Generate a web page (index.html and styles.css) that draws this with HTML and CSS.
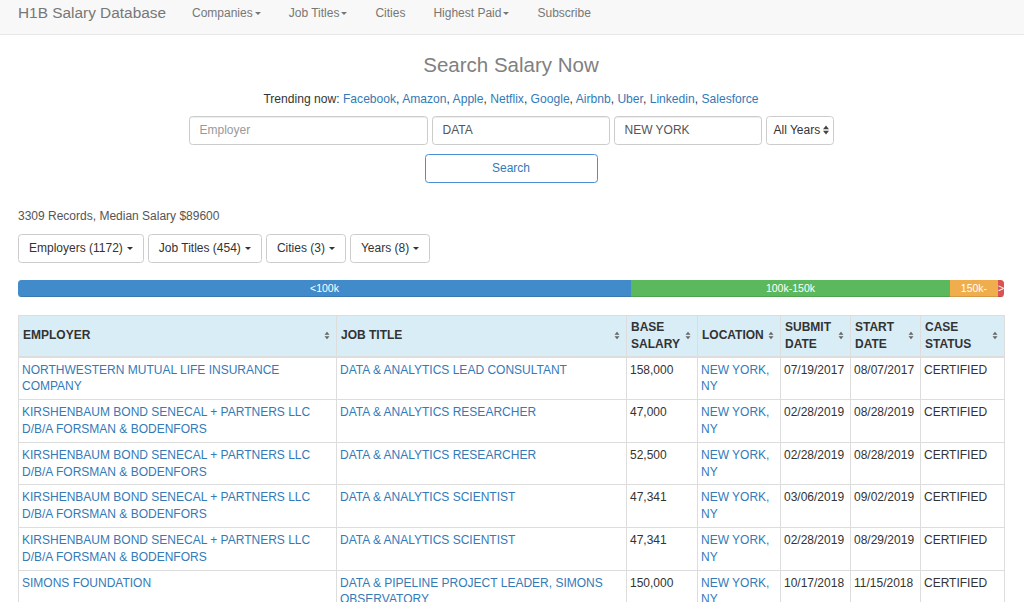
FILE: index.html
```html
<!DOCTYPE html>
<html lang="en">
<head>
<meta charset="utf-8">
<title>H1B Salary Database</title>
<link rel="stylesheet" href="styles.css">
</head>
<body>
<nav class="navbar">
  <a class="brand" href="#">H1B Salary Database</a>
  <ul class="nav">
    <li><a href="#">Companies<span class="caret"></span></a></li>
    <li><a href="#">Job Titles<span class="caret"></span></a></li>
    <li><a href="#">Cities</a></li>
    <li><a href="#">Highest Paid<span class="caret"></span></a></li>
    <li><a href="#">Subscribe</a></li>
  </ul>
</nav>
<main class="page">
  <h1 class="title">Search Salary Now</h1>
  <p class="trending">Trending now: <a href="#">Facebook</a>, <a href="#">Amazon</a>, <a href="#">Apple</a>, <a href="#">Netflix</a>, <a href="#">Google</a>, <a href="#">Airbnb</a>, <a href="#">Uber</a>, <a href="#">Linkedin</a>, <a href="#">Salesforce</a></p>
  <form class="search">
    <div class="fields">
      <input class="field f-employer" type="text" placeholder="Employer">
      <input class="field f-title" type="text" value="DATA">
      <input class="field f-city" type="text" value="NEW YORK">
      <div class="field f-year"><span>All Years</span><svg class="updown" width="6" height="10" viewBox="0 0 6 10"><path d="M0 4.2 L3 0.5 L6 4.2Z M0 5.8 L3 9.5 L6 5.8Z"/></svg></div>
    </div>
    <button class="search-btn" type="button">Search</button>
  </form>
  <p class="summary">3309 Records, Median Salary $89600</p>
  <div class="filters">
    <button class="filter" type="button">Employers (1172)<span class="caret"></span></button>
    <button class="filter" type="button">Job Titles (454)<span class="caret"></span></button>
    <button class="filter" type="button">Cities (3)<span class="caret"></span></button>
    <button class="filter" type="button">Years (8)<span class="caret"></span></button>
  </div>
  <div class="progress">
    <div class="bar bar-blue" style="width:62.17%">&lt;100k</div>
    <div class="bar bar-green" style="width:32.35%">100k-150k</div>
    <div class="bar bar-orange" style="width:4.87%">150k-</div>
    <div class="bar bar-red" style="width:0.61%">&gt;</div>
  </div>
  <table class="data">
    <colgroup>
      <col class="c-emp"><col class="c-job"><col class="c-sal"><col class="c-loc"><col class="c-sub"><col class="c-start"><col class="c-status">
    </colgroup>
    <thead>
      <tr>
        <th><div class="th-inner"><span class="th-label">EMPLOYER</span><svg class="sort" width="6" height="9" viewBox="0 0 6 9"><path d="M0.5 3.8 L3 0.8 L5.5 3.8Z M0.5 5.2 L3 8.2 L5.5 5.2Z"/></svg></div></th>
        <th><div class="th-inner"><span class="th-label">JOB TITLE</span><svg class="sort" width="6" height="9" viewBox="0 0 6 9"><path d="M0.5 3.8 L3 0.8 L5.5 3.8Z M0.5 5.2 L3 8.2 L5.5 5.2Z"/></svg></div></th>
        <th><div class="th-inner"><span class="th-label">BASE SALARY</span><svg class="sort" width="6" height="9" viewBox="0 0 6 9"><path d="M0.5 3.8 L3 0.8 L5.5 3.8Z M0.5 5.2 L3 8.2 L5.5 5.2Z"/></svg></div></th>
        <th><div class="th-inner"><span class="th-label">LOCATION</span><svg class="sort" width="6" height="9" viewBox="0 0 6 9"><path d="M0.5 3.8 L3 0.8 L5.5 3.8Z M0.5 5.2 L3 8.2 L5.5 5.2Z"/></svg></div></th>
        <th><div class="th-inner"><span class="th-label">SUBMIT DATE</span><svg class="sort" width="6" height="9" viewBox="0 0 6 9"><path d="M0.5 3.8 L3 0.8 L5.5 3.8Z M0.5 5.2 L3 8.2 L5.5 5.2Z"/></svg></div></th>
        <th><div class="th-inner"><span class="th-label">START DATE</span><svg class="sort" width="6" height="9" viewBox="0 0 6 9"><path d="M0.5 3.8 L3 0.8 L5.5 3.8Z M0.5 5.2 L3 8.2 L5.5 5.2Z"/></svg></div></th>
        <th><div class="th-inner"><span class="th-label">CASE STATUS</span><svg class="sort" width="6" height="9" viewBox="0 0 6 9"><path d="M0.5 3.8 L3 0.8 L5.5 3.8Z M0.5 5.2 L3 8.2 L5.5 5.2Z"/></svg></div></th>
      </tr>
    </thead>
    <tbody>
      <tr>
        <td><a href="#">NORTHWESTERN MUTUAL LIFE INSURANCE COMPANY</a></td>
        <td><a href="#">DATA &amp; ANALYTICS LEAD CONSULTANT</a></td>
        <td>158,000</td>
        <td><a href="#">NEW YORK, NY</a></td>
        <td class="nw">07/19/2017</td>
        <td class="nw">08/07/2017</td>
        <td>CERTIFIED</td>
      </tr>
      <tr>
        <td><a href="#">KIRSHENBAUM BOND SENECAL + PARTNERS LLC D/B/A FORSMAN &amp; BODENFORS</a></td>
        <td><a href="#">DATA &amp; ANALYTICS RESEARCHER</a></td>
        <td>47,000</td>
        <td><a href="#">NEW YORK, NY</a></td>
        <td class="nw">02/28/2019</td>
        <td class="nw">08/28/2019</td>
        <td>CERTIFIED</td>
      </tr>
      <tr>
        <td><a href="#">KIRSHENBAUM BOND SENECAL + PARTNERS LLC D/B/A FORSMAN &amp; BODENFORS</a></td>
        <td><a href="#">DATA &amp; ANALYTICS RESEARCHER</a></td>
        <td>52,500</td>
        <td><a href="#">NEW YORK, NY</a></td>
        <td class="nw">02/28/2019</td>
        <td class="nw">08/28/2019</td>
        <td>CERTIFIED</td>
      </tr>
      <tr>
        <td><a href="#">KIRSHENBAUM BOND SENECAL + PARTNERS LLC D/B/A FORSMAN &amp; BODENFORS</a></td>
        <td><a href="#">DATA &amp; ANALYTICS SCIENTIST</a></td>
        <td>47,341</td>
        <td><a href="#">NEW YORK, NY</a></td>
        <td class="nw">03/06/2019</td>
        <td class="nw">09/02/2019</td>
        <td>CERTIFIED</td>
      </tr>
      <tr>
        <td><a href="#">KIRSHENBAUM BOND SENECAL + PARTNERS LLC D/B/A FORSMAN &amp; BODENFORS</a></td>
        <td><a href="#">DATA &amp; ANALYTICS SCIENTIST</a></td>
        <td>47,341</td>
        <td><a href="#">NEW YORK, NY</a></td>
        <td class="nw">02/28/2019</td>
        <td class="nw">08/29/2019</td>
        <td>CERTIFIED</td>
      </tr>
      <tr>
        <td><a href="#">SIMONS FOUNDATION</a></td>
        <td><a href="#">DATA &amp; PIPELINE PROJECT LEADER, SIMONS OBSERVATORY</a></td>
        <td>150,000</td>
        <td><a href="#">NEW YORK, NY</a></td>
        <td class="nw">10/17/2018</td>
        <td class="nw">11/15/2018</td>
        <td>CERTIFIED</td>
      </tr>
    </tbody>
  </table>
</main>
</body>
</html>
```

FILE: styles.css
```css
html {
  overflow: hidden;
}

body {
  margin: 0;
  font-family: "Liberation Sans", Arial, sans-serif;
  font-size: 12px;
  line-height: 1.4;
  color: #333;
  background: #fff;
}

a {
  color: #337ab7;
  text-decoration: none;
}

.navbar {
  height: 34px;
  border-bottom: 1px solid #e7e7e7;
  background: #f8f8f8;
  display: flex;
  align-items: flex-start;
  padding-left: 18px;
}

.brand {
  font-size: 15.4px;
  line-height: 20px;
  padding-top: 3px;
  margin-right: 12px;
  color: #777;
}

.nav {
  display: flex;
  list-style: none;
  margin: 0;
  padding: 0;
}

.nav a {
  display: block;
  padding: 4.5px 14px 0;
  line-height: 17px;
  color: #777;
}

.caret {
  display: inline-block;
  width: 0;
  height: 0;
  margin-left: 2px;
  vertical-align: middle;
  border-top: 3.5px solid;
  border-left: 3.5px solid transparent;
  border-right: 3.5px solid transparent;
}

.page {
  padding: 0 20px 0 18px;
}

.title {
  margin: 18px 0 0;
  font-size: 20.5px;
  line-height: 23px;
  font-weight: 400;
  text-align: center;
  color: #808080;
}

.trending {
  margin: 15px 0 0;
  line-height: 17px;
  font-size: 12.1px;
  text-align: center;
}

.search {
  margin: 7.5px 0 0;
  display: flex;
  flex-direction: column;
  align-items: center;
  gap: 9px;
}

.fields {
  display: flex;
  gap: 4px;
}

.field {
  box-sizing: border-box;
  height: 29px;
  margin: 0;
  border: 1px solid #ccc;
  border-radius: 3.5px;
  padding: 0 10px;
  font-family: "Liberation Sans", Arial, sans-serif;
  font-size: 12px;
  color: #555;
  background: #fff;
  box-shadow: inset 0 1px 1px rgba(0, 0, 0, 0.075);
}

.field::placeholder {
  color: #999;
}

.f-employer { width: 239px; }
.f-title { width: 178px; }
.f-city { width: 148px; }

.f-year {
  width: 68px;
  display: flex;
  align-items: center;
  justify-content: space-between;
  gap: 2px;
  padding: 0 4px 0 7px;
  white-space: nowrap;
  color: #333;
  box-shadow: none;
}

.updown {
  flex: none;
  fill: #444;
}

.search-btn {
  width: 173px;
  height: 29px;
  border: 1px solid #4a8fd4;
  border-radius: 3.5px;
  background: #fff;
  color: #337ab7;
  font-family: "Liberation Sans", Arial, sans-serif;
  font-size: 12px;
}

.summary {
  margin: 25.5px 0 0;
  line-height: 17px;
  color: #555;
}

.filters {
  margin-top: 8.5px;
  display: flex;
  gap: 4px;
}

.filter {
  height: 29px;
  padding: 0 10px;
  border: 1px solid #ccc;
  border-radius: 3.5px;
  background: #fff;
  color: #333;
  font-family: "Liberation Sans", Arial, sans-serif;
  font-size: 12px;
}

.filter .caret {
  margin-left: 4px;
  border-top-width: 3px;
  border-left-width: 3px;
  border-right-width: 3px;
}

.progress {
  margin-top: 17.5px;
  height: 17px;
  border-radius: 3.5px;
  overflow: hidden;
  display: flex;
  background: #f5f5f5;
}

.bar {
  color: #fff;
  font-size: 10.5px;
  line-height: 17px;
  text-align: center;
  white-space: nowrap;
  overflow: hidden;
  box-shadow: inset 0 -1px 0 rgba(0, 0, 0, 0.12);
}

.bar-blue { background: #428bca; }
.bar-green { background: #5cb85c; }
.bar-orange { background: #f0ad4e; }
.bar-red { background: #d9534f; }

.data {
  margin-top: 18px;
  width: 100%;
  border-collapse: collapse;
  table-layout: fixed;
  border: 1px solid #ddd;
}

.c-emp { width: 318px; }
.c-job { width: 290px; }
.c-sal { width: 71px; }
.c-loc { width: 83px; }
.c-sub { width: 70px; }
.c-start { width: 70px; }
.c-status { width: 84px; }

.data th {
  background: #d9edf7;
  padding: 3px 6px 3px 4px;
  border: 1px solid #ddd;
  border-bottom-width: 2px;
  text-align: left;
  vertical-align: middle;
  font-weight: 700;
}

.th-inner {
  display: flex;
  align-items: center;
  gap: 3px;
}

.th-label {
  flex: 1;
}

.sort {
  flex: none;
  fill: #666;
}

.data td {
  padding: 4px 4px 4px 3px;
  border: 1px solid #ddd;
  vertical-align: top;
}

.nw {
  white-space: nowrap;
}
```
